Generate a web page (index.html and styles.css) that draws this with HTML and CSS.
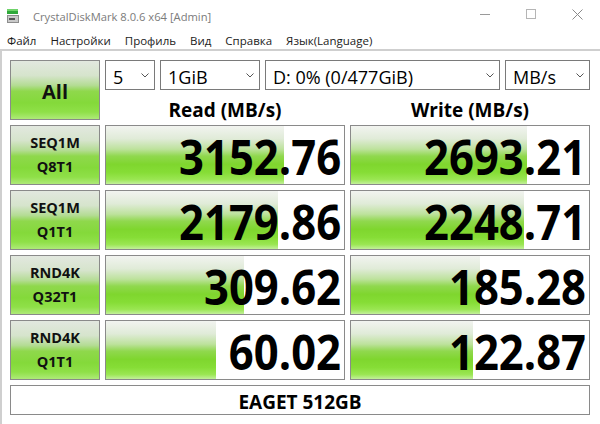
FILE: index.html
```html
<!DOCTYPE html>
<html lang="ru">
<head>
<meta charset="utf-8">
<title>CrystalDiskMark 8.0.6 x64 [Admin]</title>
<link rel="stylesheet" href="styles.css">
</head>
<body>
<div class="window">
  <header class="titlebar">
    <svg class="appicon" width="16" height="16" viewBox="0 0 16 16" aria-hidden="true">
      <rect x="1" y="1" width="11" height="5" fill="#2fa83a"/>
      <rect x="1" y="1" width="11" height="2" fill="#6fd36a"/>
      <rect x="1" y="7" width="12" height="8" fill="#8d8d8d"/>
      <rect x="2" y="8" width="10" height="6" fill="#c9c9c9"/>
      <rect x="3" y="10" width="6" height="2" fill="#555"/>
    </svg>
    <span class="title">CrystalDiskMark 8.0.6 x64 [Admin]</span>
    <div class="caption">
      <span class="cbtn"><svg width="10" height="10" viewBox="0 0 10 10"><line x1="0" y1="5.5" x2="10" y2="5.5" stroke="#9a9a9a" stroke-width="1"/></svg></span>
      <span class="cbtn"><svg width="10" height="10" viewBox="0 0 10 10"><rect x="0.5" y="0.5" width="9" height="9" fill="none" stroke="#b5b5b5" stroke-width="1"/></svg></span>
      <span class="cbtn"><svg width="11" height="11" viewBox="0 0 11 11"><path d="M0.5 0.5 L10.5 10.5 M10.5 0.5 L0.5 10.5" stroke="#8a8a8a" stroke-width="1" fill="none"/></svg></span>
    </div>
  </header>
  <nav class="menubar">
    <span class="mi">Файл</span>
    <span class="mi">Настройки</span>
    <span class="mi">Профиль</span>
    <span class="mi">Вид</span>
    <span class="mi">Справка</span>
    <span class="mi">Язык(Language)</span>
  </nav>
  <main class="client">
    <div class="board">
      <div class="btn all"><span>All</span></div>
      <div class="top">
        <div class="selects">
          <div class="sel w1"><span class="val">5</span><svg class="chev" width="8" height="5" viewBox="0 0 8 5"><polyline points="0.5,0.5 4,4 7.5,0.5" fill="none" stroke="#555" stroke-width="1"/></svg></div>
          <div class="sel w2"><span class="val">1GiB</span><svg class="chev" width="8" height="5" viewBox="0 0 8 5"><polyline points="0.5,0.5 4,4 7.5,0.5" fill="none" stroke="#555" stroke-width="1"/></svg></div>
          <div class="sel w3"><span class="val">D: 0% (0/477GiB)</span><svg class="chev" width="8" height="5" viewBox="0 0 8 5"><polyline points="0.5,0.5 4,4 7.5,0.5" fill="none" stroke="#555" stroke-width="1"/></svg></div>
          <div class="sel w4"><span class="val">MB/s</span><svg class="chev" width="8" height="5" viewBox="0 0 8 5"><polyline points="0.5,0.5 4,4 7.5,0.5" fill="none" stroke="#555" stroke-width="1"/></svg></div>
        </div>
        <div class="head">Read (MB/s)</div>
        <div class="head">Write (MB/s)</div>
      </div>

      <div class="btn label"><span>SEQ1M</span><span>Q8T1</span></div>
      <div class="cell"><div class="bar" style="width:74.8%"></div><div class="num">3152.76</div></div>
      <div class="cell"><div class="bar" style="width:74%"></div><div class="num">2693.21</div></div>

      <div class="btn label"><span>SEQ1M</span><span>Q1T1</span></div>
      <div class="cell"><div class="bar" style="width:72.3%"></div><div class="num">2179.86</div></div>
      <div class="cell"><div class="bar" style="width:72.7%"></div><div class="num">2248.71</div></div>

      <div class="btn label"><span>RND4K</span><span>Q32T1</span></div>
      <div class="cell"><div class="bar" style="width:58%"></div><div class="num">309.62</div></div>
      <div class="cell"><div class="bar" style="width:54.2%"></div><div class="num">185.28</div></div>

      <div class="btn label"><span>RND4K</span><span>Q1T1</span></div>
      <div class="cell"><div class="bar" style="width:46.2%"></div><div class="num">60.02</div></div>
      <div class="cell"><div class="bar" style="width:51.3%"></div><div class="num">122.87</div></div>

      <div class="footer">EAGET 512GB</div>
    </div>
  </main>
</div>
</body>
</html>
```

FILE: styles.css
```css
* { box-sizing: border-box; }

body {
  margin: 0;
  background: #ffffff;
  font-family: "Open Sans", "Noto Sans", sans-serif;
  color: #000;
}

.window {
  width: 600px;
  height: 424px;
  overflow: hidden;
  background: #ffffff;
}

/* title bar */
.titlebar {
  height: 32px;
  display: flex;
  align-items: center;
}

.appicon {
  margin-left: 6px;
  flex: none;
}

.title {
  margin-left: 11px;
  font-size: 11.2px;
  color: #7b7b7b;
  white-space: nowrap;
}

.caption {
  margin-left: auto;
  display: flex;
  align-self: flex-start;
}

.cbtn {
  width: 46px;
  height: 28px;
  display: flex;
  align-items: center;
  justify-content: center;
}

/* menu */
.menubar {
  height: 17px;
  display: flex;
  align-items: center;
  font-size: 11.5px;
  color: #1b1b1b;
}

.mi {
  padding: 0 7px;
  white-space: nowrap;
}

/* client area */
.client {
  height: 375px;
  border-top: 2px solid #cfcfcf;
  border-left: 2px solid #cfcfcf;
  padding: 9px 0 0 8px;
}

.board {
  display: grid;
  grid-template-columns: 90px 240px 240px;
  grid-template-rows: 60px 60px 60px 60px 60px 30px;
  column-gap: 5px;
  row-gap: 5px;
}

.btn {
  border: 1px solid #8a8a8a;
  background: linear-gradient(to bottom,
    #e2e8df 0%,
    #d6e4cc 25%,
    #b4dc94 42%,
    #8fd84c 52%,
    #84d93a 72%,
    #8fe048 88%,
    #aeea78 100%);
  display: flex;
  flex-direction: column;
  align-items: center;
  justify-content: center;
  font-weight: 700;
  color: #111;
}

.all {
  font-size: 20px;
  padding-top: 2px;
}

.label {
  font-size: 14.5px;
  line-height: 24px;
}

.top {
  grid-column: 2 / 4;
  display: grid;
  grid-template-columns: 240px 240px;
  grid-template-rows: 30px 30px;
  column-gap: 5px;
}

.selects {
  grid-column: 1 / 3;
  display: flex;
  gap: 5px;
}

.sel {
  border: 1px solid #7a7a7a;
  background: #fff;
  display: flex;
  align-items: center;
  justify-content: space-between;
  padding: 0 5px 0 7px;
  font-size: 18px;
  line-height: 18px;
  color: #000;
}

.val {
  padding-top: 4px;
  white-space: nowrap;
}

.chev { flex: none; }

.w1 { width: 50px; }
.w2 { width: 100px; }
.w3 { width: 235px; }
.w4 { width: 85px; }

.head {
  text-align: center;
  font-weight: 700;
  font-size: 19px;
  line-height: 24px;
  padding-top: 8px;
  color: #000;
}

/* result cells */
.cell {
  border: 1px solid #8a8a8a;
  background: #fff;
  display: grid;
}

.bar,
.num {
  grid-area: 1 / 1;
}

.bar {
  justify-self: start;
  height: 100%;
  background: linear-gradient(to bottom,
    #f2f4f0 0%,
    #e0ebd8 22%,
    #bde29c 40%,
    #90d84e 52%,
    #7fd62e 66%,
    #86dd36 80%,
    #9ae652 92%,
    #c2f09a 100%);
}

.num {
  justify-self: end;
  align-self: center;
  margin: 2px 3px 0 0;
  font-size: 49px;
  line-height: 49px;
  font-weight: 700;
  color: #000;
  white-space: nowrap;
  transform: scaleX(0.89);
  transform-origin: 100% 50%;
}

.footer {
  grid-column: 1 / 4;
  border: 1px solid #8a8a8a;
  display: flex;
  align-items: center;
  justify-content: center;
  padding-top: 3px;
  font-weight: 700;
  font-size: 19px;
  color: #000;
}
```
